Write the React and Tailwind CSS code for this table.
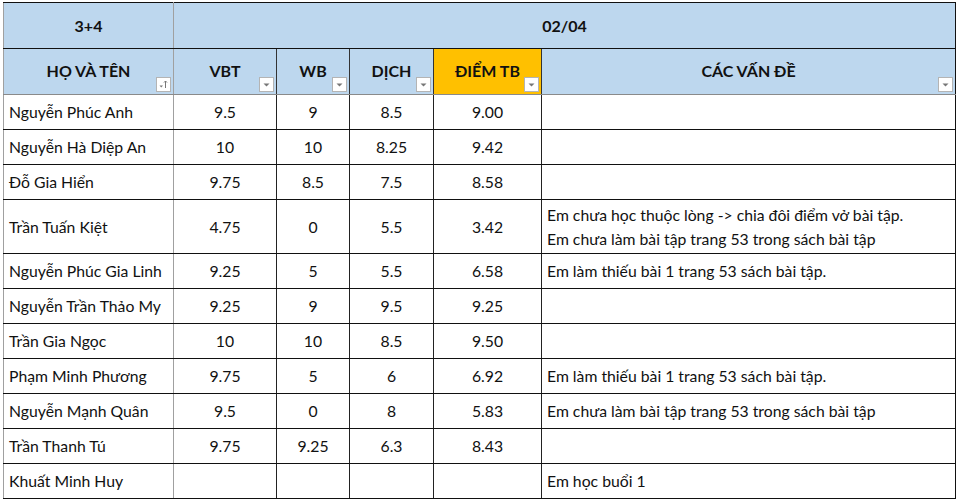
import React from 'react';

const rows = [
    { name: 'Nguyễn Phúc Anh', vbt: '9.5', wb: '9', dich: '8.5', tb: '9.00', notes: [] },
    { name: 'Nguyễn Hà Diệp An', vbt: '10', wb: '10', dich: '8.25', tb: '9.42', notes: [] },
    { name: 'Đỗ Gia Hiển', vbt: '9.75', wb: '8.5', dich: '7.5', tb: '8.58', notes: [] },
    {
        name: 'Trần Tuấn Kiệt', vbt: '4.75', wb: '0', dich: '5.5', tb: '3.42', tall: true,
        notes: ['Em chưa học thuộc lòng -> chia đôi điểm vở bài tập.', 'Em chưa làm bài tập trang 53 trong sách bài tập'],
    },
    { name: 'Nguyễn Phúc Gia Linh', vbt: '9.25', wb: '5', dich: '5.5', tb: '6.58', notes: ['Em làm thiếu bài 1 trang 53 sách bài tập.'] },
    { name: 'Nguyễn Trần Thảo My', vbt: '9.25', wb: '9', dich: '9.5', tb: '9.25', notes: [] },
    { name: 'Trần Gia Ngọc', vbt: '10', wb: '10', dich: '8.5', tb: '9.50', notes: [] },
    { name: 'Phạm Minh Phương', vbt: '9.75', wb: '5', dich: '6', tb: '6.92', notes: ['Em làm thiếu bài 1 trang 53 sách bài tập.'] },
    { name: 'Nguyễn Mạnh Quân', vbt: '9.5', wb: '0', dich: '8', tb: '5.83', notes: ['Em chưa làm bài tập trang 53 trong sách bài tập'] },
    { name: 'Trần Thanh Tú', vbt: '9.75', wb: '9.25', dich: '6.3', tb: '8.43', notes: [] },
    { name: 'Khuất Minh Huy', vbt: '', wb: '', dich: '', tb: '', notes: ['Em học buổi 1'] },
];

const FilterBtn = ({ sort }) => (
    <span className="absolute right-[2px] bottom-[2px] w-[15px] h-[15px] bg-white border border-[#b4b4b4] flex items-center justify-center">
        {sort ? (
            <svg width="11" height="11" viewBox="0 0 11 11">
                <path d="M1.5 6.5 L5 6.5 L3.25 8.5 Z" fill="#777" />
                <path d="M7.5 2 L7.5 9" stroke="#777" strokeWidth="1" />
                <path d="M6 3.5 L7.5 2 L9 3.5" stroke="#777" strokeWidth="1" fill="none" />
            </svg>
        ) : (
            <svg width="9" height="9" viewBox="0 0 9 9">
                <path d="M1.5 3.5 L7.5 3.5 L4.5 6.5 Z" fill="#777" />
            </svg>
        )}
    </span>
);

const HeadCell = ({ children, className = '', sort }) => (
    <th className={`relative h-[46px] p-0 font-bold text-[16px] text-[#111] border-b border-b-[#8a8a8a] ${className}`}>
        <span className="block -mt-[2px]">{children}</span>
        <FilterBtn sort={sort} />
    </th>
);

const App = () => {
    return (
        <div className="w-[958px] h-[500px] bg-white pl-[3px] pt-[2px] overflow-hidden font-['Lato','Noto_Sans',sans-serif] text-[15.75px] text-[#111]">
            <table className="border-collapse table-fixed w-[952px] border-l border-l-[#a0a0a0]">
                <colgroup>
                    <col className="w-[170px]" />
                    <col className="w-[103px]" />
                    <col className="w-[73px]" />
                    <col className="w-[84px]" />
                    <col className="w-[108px]" />
                    <col className="w-[414px]" />
                </colgroup>
                <thead>
                    <tr className="bg-[#bdd7ee]">
                        <th className="h-[46px] p-0 font-bold text-[16px] border-t border-t-[#111] border-b border-b-[#111] border-r border-r-[#a0a0a0]">3+4</th>
                        <th colSpan={5} className="h-[46px] p-0 font-bold text-[16px] border-t border-t-[#111] border-b border-b-[#111] border-r border-r-[#111]">02/04</th>
                    </tr>
                    <tr className="bg-[#bdd7ee]">
                        <HeadCell sort className="border-r border-r-[#a0a0a0]">HỌ VÀ TÊN</HeadCell>
                        <HeadCell className="border-r border-r-[#333]">VBT</HeadCell>
                        <HeadCell className="border-r border-r-[#333]">WB</HeadCell>
                        <HeadCell className="border-r border-r-[#333]">DỊCH</HeadCell>
                        <HeadCell className="bg-[#ffc000] border-r border-r-[#333]">ĐIỂM TB</HeadCell>
                        <HeadCell className="border-r border-r-[#111]">CÁC VẤN ĐỀ</HeadCell>
                    </tr>
                </thead>
                <tbody>
                    {rows.map(r => (
                        <tr key={r.name} className={r.tall ? 'h-[54px]' : 'h-[35px]'}>
                            <td className="px-[5px] py-0 whitespace-nowrap border-b border-b-[#111] border-r border-r-[#a0a0a0]">{r.name}</td>
                            <td className="p-0 text-center border-b border-b-[#111] border-r border-r-[#222]">{r.vbt}</td>
                            <td className="p-0 text-center border-b border-b-[#111] border-r border-r-[#222]">{r.wb}</td>
                            <td className="p-0 text-center border-b border-b-[#111] border-r border-r-[#222]">{r.dich}</td>
                            <td className="p-0 text-center border-b border-b-[#111] border-r border-r-[#222]">{r.tb}</td>
                            <td className="px-[5px] py-0 whitespace-nowrap leading-[24px] border-b border-b-[#111] border-r border-r-[#111]">
                                {r.notes.map(n => (
                                    <div key={n}>{n}</div>
                                ))}
                            </td>
                        </tr>
                    ))}
                </tbody>
            </table>
        </div>
    );
};

export default App;
